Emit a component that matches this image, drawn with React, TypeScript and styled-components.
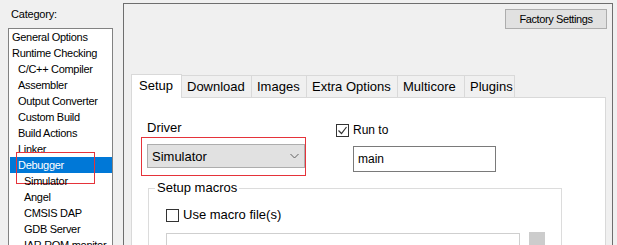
import styled, { createGlobalStyle } from "styled-components";

const GlobalStyle = createGlobalStyle`
  html, body {
    margin: 0;
    padding: 0;
    background: #f0f0f0;
    overflow: hidden;
  }
  body {
    font-family: "Liberation Sans", Arial, sans-serif;
    color: #000;
  }
`;

const Window = styled.div`
  width: 617px;
  height: 245px;
  display: flex;
  align-items: flex-start;
  overflow: hidden;
`;

const Sidebar = styled.div`
  width: 115px;
  padding-left: 8px;
  display: flex;
  flex-direction: column;
  flex-shrink: 0;
`;

const CategoryLabel = styled.div`
  font-size: 11px;
  line-height: 16px;
  padding: 6px 0 0 3px;
  margin-bottom: 6px;
  letter-spacing: -0.2px;
`;

const ListBox = styled.div`
  width: 103px;
  height: 240px;
  background: #fff;
  border: 1px solid #828282;
  overflow: hidden;
`;

const Item = styled.div<{ $level: number; $selected?: boolean }>`
  position: relative;
  height: 16px;
  line-height: 16px;
  margin-left: 1px;
  padding-left: ${(p) => 2 + p.$level * 6}px;
  font-size: 11px;
  letter-spacing: -0.3px;
  white-space: nowrap;
  background: ${(p) => (p.$selected ? "#0078d7" : "transparent")};
  color: ${(p) => (p.$selected ? "#fff" : "#000")};
`;

const Marker = styled.div`
  position: absolute;
  border: 1px solid #e5333a;
  pointer-events: none;
`;

const ItemMarker = styled(Marker)`
  left: 6px;
  top: -5px;
  width: 77px;
  height: 30px;
`;

const Panel = styled.div`
  flex: 1;
  margin: 3px 4px 0 0;
  height: 260px;
  border: 1px solid #6e6e6e;
  padding: 5px 5px 0 7px;
  display: flex;
  flex-direction: column;
`;

const TopBar = styled.div`
  display: flex;
  justify-content: flex-end;
  margin-bottom: 44px;
`;

const Button = styled.button`
  width: 102px;
  height: 20px;
  background: #e1e1e1;
  border: 1px solid #adadad;
  font-family: "Liberation Sans", Arial, sans-serif;
  font-size: 11px;
  letter-spacing: -0.4px;
  padding: 0;
  color: #000;
`;

const TabArea = styled.div`
  margin-right: 1px;
  display: flex;
  flex-direction: column;
`;

const TabBar = styled.div`
  display: flex;
  align-items: flex-end;
  height: 24px;
`;

const Tab = styled.div<{ $w: number; $active?: boolean }>`
  width: ${(p) => p.$w}px;
  height: ${(p) => (p.$active ? 24 : 22)}px;
  box-sizing: border-box;
  border: 1px solid #d9d9d9;
  border-left-width: ${(p) => (p.$active ? 1 : 0)}px;
  border-bottom: none;
  background: ${(p) => (p.$active ? "#fff" : "#f0f0f0")};
  font-size: 13px;
  line-height: 22px;
  padding-left: ${(p) => (p.$active ? 7 : 5)}px;
  margin-bottom: ${(p) => (p.$active ? -1 : 0)}px;
  position: relative;
  white-space: nowrap;
`;

const TabBody = styled.div`
  background: #fff;
  border: 1px solid #d9d9d9;
  height: 200px;
  padding: 22px 0 0 15px;
`;

const TopRow = styled.div`
  display: flex;
  align-items: flex-start;
`;

const DriverCol = styled.div`
  width: 189px;
  display: flex;
  flex-direction: column;
  gap: 8px;
`;

const RunCol = styled.div`
  display: flex;
  flex-direction: column;
  gap: 8px;
  padding-top: 2px;
`;

const Label = styled.div<{ $size?: number }>`
  font-size: ${(p) => p.$size ?? 13}px;
  line-height: 16px;
  white-space: nowrap;
`;

const SelectWrap = styled.div`
  position: relative;
  width: 158px;
`;

const SelectBox = styled.div`
  height: 24px;
  box-sizing: border-box;
  background: #e1e1e1;
  border: 1px solid #adadad;
  display: flex;
  align-items: center;
  justify-content: space-between;
  padding: 0 5px 0 4px;
  font-size: 13px;
`;

const SelectMarker = styled(Marker)`
  left: -6px;
  top: -7px;
  width: 163px;
  height: 37px;
`;

const CheckRow = styled.label`
  display: flex;
  align-items: center;
  gap: 4px;
  height: 16px;
`;

const Check = styled.span`
  width: 13px;
  height: 13px;
  box-sizing: border-box;
  border: 1px solid #333;
  background: #fff;
  display: flex;
  align-items: center;
  justify-content: center;
`;

const TextInput = styled.div`
  width: 143px;
  height: 26px;
  margin-left: 17px;
  box-sizing: border-box;
  border: 1px solid #7a7a7a;
  background: #fff;
  font-size: 12px;
  line-height: 24px;
  padding-left: 4px;
`;

const GroupBox = styled.fieldset`
  margin: 8px 0 0 1px;
  width: 414px;
  box-sizing: border-box;
  border: 1px solid #dcdcdc;
  padding: 0 0 10px 6px;
  min-width: 0;
`;

const GroupTitle = styled.legend`
  font-size: 13px;
  line-height: 16px;
  padding: 0 2px;
`;

const GroupInner = styled.div`
  margin: 11px 0 0 11px;
  display: flex;
  flex-direction: column;
  gap: 10px;
`;

const FileRow = styled.div`
  display: flex;
  align-items: flex-start;
  gap: 9px;
`;

const FileField = styled.div`
  width: 352px;
  height: 24px;
  border: 1px solid #cfcfcf;
  background: #fff;
`;

const BrowseButton = styled.div`
  width: 16px;
  height: 22px;
  margin-top: -1px;
  background: #cccccc;
`;

const categories: { name: string; level: number }[] = [
  { name: "General Options", level: 0 },
  { name: "Runtime Checking", level: 0 },
  { name: "C/C++ Compiler", level: 1 },
  { name: "Assembler", level: 1 },
  { name: "Output Converter", level: 1 },
  { name: "Custom Build", level: 1 },
  { name: "Build Actions", level: 1 },
  { name: "Linker", level: 1 },
  { name: "Debugger", level: 1 },
  { name: "Simulator", level: 2 },
  { name: "Angel", level: 2 },
  { name: "CMSIS DAP", level: 2 },
  { name: "GDB Server", level: 2 },
  { name: "IAR ROM monitor", level: 2 },
];

const tabs = [
  { name: "Setup", w: 51 },
  { name: "Download", w: 70 },
  { name: "Images", w: 55 },
  { name: "Extra Options", w: 91 },
  { name: "Multicore", w: 67 },
  { name: "Plugins", w: 50 },
];

const Tick = () => (
  <svg width="11" height="11" viewBox="0 0 11 11">
    <polyline points="1.5,5.5 4.5,8.5 9.5,2" fill="none" stroke="#333" strokeWidth="1.2" />
  </svg>
);

const Chevron = () => (
  <svg width="9" height="6" viewBox="0 0 9 6">
    <polyline points="0.5,1 4.5,5 8.5,1" fill="none" stroke="#606060" strokeWidth="1" />
  </svg>
);

const App = () => {
  return (
    <Window>
      <GlobalStyle />
      <Sidebar>
        <CategoryLabel>Category:</CategoryLabel>
        <ListBox>
          {categories.map((c) => (
            <Item key={c.name} $level={c.level} $selected={c.name === "Debugger"}>
              {c.name}
              {c.name === "Debugger" && <ItemMarker />}
            </Item>
          ))}
        </ListBox>
      </Sidebar>
      <Panel>
        <TopBar>
          <Button>Factory Settings</Button>
        </TopBar>
        <TabArea>
          <TabBar>
            {tabs.map((t, i) => (
              <Tab key={t.name} $w={t.w} $active={i === 0}>
                {t.name}
              </Tab>
            ))}
          </TabBar>
          <TabBody>
            <TopRow>
              <DriverCol>
                <Label>Driver</Label>
                <SelectWrap>
                  <SelectBox>
                    <span>Simulator</span>
                    <Chevron />
                  </SelectBox>
                  <SelectMarker />
                </SelectWrap>
              </DriverCol>
              <RunCol>
                <CheckRow>
                  <Check>
                    <Tick />
                  </Check>
                  <Label $size={12}>Run to</Label>
                </CheckRow>
                <TextInput>main</TextInput>
              </RunCol>
            </TopRow>
            <GroupBox>
              <GroupTitle>Setup macros</GroupTitle>
              <GroupInner>
                <CheckRow>
                  <Check />
                  <Label>Use macro file(s)</Label>
                </CheckRow>
                <FileRow>
                  <FileField />
                  <BrowseButton />
                </FileRow>
              </GroupInner>
            </GroupBox>
          </TabBody>
        </TabArea>
      </Panel>
    </Window>
  );
};

export default App;
